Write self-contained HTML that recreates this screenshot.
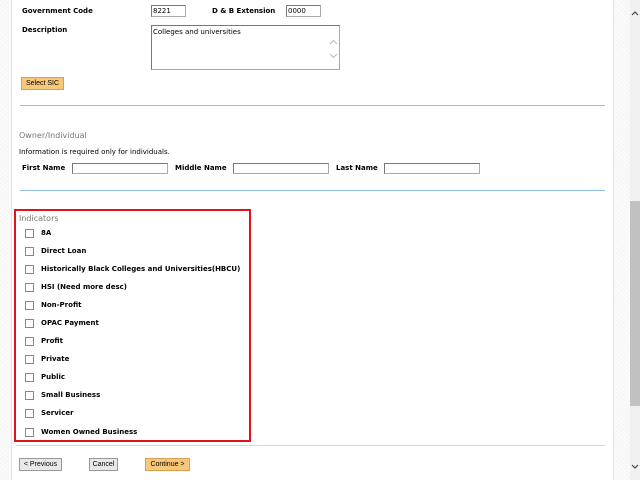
<!DOCTYPE html>
<html><head><meta charset="utf-8"><style>
*{margin:0;padding:0;box-sizing:border-box}
body{width:640px;height:480px;overflow:hidden;position:relative;background:#fff;font-family:"DejaVu Sans","Liberation Sans",sans-serif;font-size:7px;color:#000}
.hatch{position:absolute;top:0;height:480px;background:repeating-linear-gradient(45deg,#f4f4f4 0 1px,#fbfbfb 1px 3px)}
.a{position:absolute;white-space:nowrap}
.b{font-weight:bold}
.in{position:absolute;border:1px solid #aaa;border-top-color:#777;border-left-color:#777;background:#fff;font-size:7px;padding-left:1px;line-height:11px}
.hr{position:absolute;height:1px;background:#8fc0ec}
.cb{position:absolute;left:25px;width:9px;height:9px;border:1px solid #888;background:#fff}
.btn{position:absolute;height:13px;border:1px solid #999;background:#e8e8e8;font-size:7px;line-height:11px;text-align:center;font-family:"Liberation Sans",sans-serif}
.or{background:#f7c77a;border-color:#d9a050}
</style></head><body>
<div class="hatch" style="left:0;width:11px"></div>
<div style="position:absolute;left:11px;top:0;width:1px;height:480px;background:#dde4ec"></div>
<div class="hatch" style="left:614px;width:16px"></div>
<div style="position:absolute;left:613px;top:0;width:1px;height:480px;background:#dde4ec"></div>
<div style="position:absolute;left:630px;top:0;width:10px;height:480px;background:#f0f0f0"></div>
<div style="position:absolute;left:630px;top:201px;width:10px;height:205px;background:#c1c1c1"></div>
<svg style="position:absolute;left:631px;top:10px" width="8" height="6"><path d="M1 5 L4 2 L7 5" fill="none" stroke="#444" stroke-width="1.2"/></svg>
<svg style="position:absolute;left:631px;top:464px" width="8" height="6"><path d="M1 1 L4 4 L7 1" fill="none" stroke="#444" stroke-width="1.2"/></svg>

<div class="a b" style="left:22px;top:7px">Government Code</div>
<div class="in" style="left:151px;top:5px;width:35px;height:12px">8221</div>
<div class="a b" style="left:212px;top:7px">D &amp; B Extension</div>
<div class="in" style="left:286px;top:5px;width:35px;height:12px">0000</div>
<div class="a b" style="left:22px;top:26px">Description</div>
<div class="in" style="left:151px;top:25px;width:189px;height:45px;line-height:12px">Colleges and universities
<svg style="position:absolute;right:1px;top:13px" width="9" height="6"><path d="M1 5 L4.5 1.5 L8 5" fill="none" stroke="#bbb" stroke-width="1"/></svg>
<svg style="position:absolute;right:1px;top:27px" width="9" height="6"><path d="M1 1 L4.5 4.5 L8 1" fill="none" stroke="#bbb" stroke-width="1"/></svg></div>
<div class="btn or" style="left:21px;top:77px;width:43px;color:#000">Select SIC</div>
<div class="hr" style="left:20px;top:105px;width:585px"></div>

<div class="a" style="left:19px;top:131px;color:#777;font-size:8px">Owner/Individual</div>
<div class="a" style="left:19px;top:148px">Information is required only for individuals.</div>
<div class="a b" style="left:22px;top:164px">First Name</div>
<div class="in" style="left:72px;top:163px;width:96px;height:11px"></div>
<div class="a b" style="left:175px;top:164px">Middle Name</div>
<div class="in" style="left:233px;top:163px;width:96px;height:11px"></div>
<div class="a b" style="left:336px;top:164px">Last Name</div>
<div class="in" style="left:384px;top:163px;width:96px;height:11px"></div>
<div class="hr" style="left:20px;top:190px;width:585px"></div>

<div style="position:absolute;left:14px;top:209px;width:237px;height:233px;border:2px solid #e0141e"></div>
<div class="a" style="left:19px;top:214px;color:#777;font-size:8px">Indicators</div>
<div class="cb" style="top:229px"></div><div class="a b" style="left:41px;top:229px">8A</div>
<div class="cb" style="top:247px"></div><div class="a b" style="left:41px;top:247px">Direct Loan</div>
<div class="cb" style="top:265px"></div><div class="a b" style="left:41px;top:265px">Historically Black Colleges and Universities(HBCU)</div>
<div class="cb" style="top:283px"></div><div class="a b" style="left:41px;top:283px">HSI (Need more desc)</div>
<div class="cb" style="top:301px"></div><div class="a b" style="left:41px;top:301px">Non-Profit</div>
<div class="cb" style="top:319px"></div><div class="a b" style="left:41px;top:319px">OPAC Payment</div>
<div class="cb" style="top:337px"></div><div class="a b" style="left:41px;top:337px">Profit</div>
<div class="cb" style="top:355px"></div><div class="a b" style="left:41px;top:355px">Private</div>
<div class="cb" style="top:373px"></div><div class="a b" style="left:41px;top:373px">Public</div>
<div class="cb" style="top:391px"></div><div class="a b" style="left:41px;top:391px">Small Business</div>
<div class="cb" style="top:409px"></div><div class="a b" style="left:41px;top:409px">Servicer</div>
<div class="cb" style="top:428px"></div><div class="a b" style="left:41px;top:428px">Women Owned Business</div>
<div class="hr" style="left:16px;top:445px;width:589px;background:#c5dcf0"></div>

<div class="btn" style="left:19px;top:458px;width:43px">&lt; Previous</div>
<div class="btn" style="left:89px;top:458px;width:29px">Cancel</div>
<div class="btn or" style="left:145px;top:458px;width:45px">Continue &gt;</div>
</body></html>
